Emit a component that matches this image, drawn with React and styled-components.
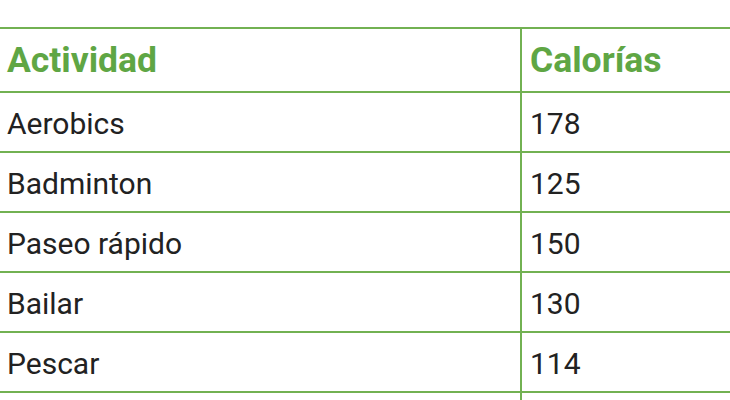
import React from "react";
import styled, { createGlobalStyle } from "styled-components";

const Global = createGlobalStyle`
  html, body { margin: 0; padding: 0; background: #fff; }
  body { overflow: hidden; width: 730px; height: 400px; font-family: Roboto, "Liberation Sans", Arial, sans-serif; }
`;

const Frame = styled.div`
  width: 730px;
  height: 400px;
  overflow: hidden;
  padding-top: 27px;
  box-sizing: border-box;
`;

const Table = styled.table`
  border-collapse: separate;
  border-spacing: 0;
  width: 1040px;
  border-top: 2px solid #72b152;
  table-layout: fixed;
`;

const Head = styled.th`
  height: 64px;
  padding: 0 0 0 ${p => (p.$first ? 7 : 8)}px;
  text-align: left;
  font-weight: 700;
  font-size: 35.5px;
  color: #5fa644;
  border-bottom: 2px solid #72b152;
  border-right: ${p => (p.$first ? "2px solid #72b152" : "none")};
  width: ${p => (p.$first ? "522px" : "auto")};
  box-sizing: border-box;
  vertical-align: middle;
`;

const Cell = styled.td`
  height: 60px;
  padding: 2px 0 0 ${p => (p.$first ? 7 : 8)}px;
  font-size: 30px;
  font-weight: 400;
  color: #222;
  border-bottom: 2px solid #72b152;
  border-right: ${p => (p.$first ? "2px solid #72b152" : "none")};
  box-sizing: border-box;
  vertical-align: middle;
  white-space: nowrap;
`;

const rows = [
  ["Aerobics", "178"],
  ["Badminton", "125"],
  ["Paseo rápido", "150"],
  ["Bailar", "130"],
  ["Pescar", "114"],
  ["", ""],
];

export default function App() {
  return (
    <>
      <Global />
      <Frame>
        <Table>
          <thead>
            <tr>
              <Head $first>Actividad</Head>
              <Head>Calorías</Head>
            </tr>
          </thead>
          <tbody>
            {rows.map(([a, c], i) => (
              <tr key={i}>
                <Cell $first>{a}</Cell>
                <Cell>{c}</Cell>
              </tr>
            ))}
          </tbody>
        </Table>
      </Frame>
    </>
  );
}
